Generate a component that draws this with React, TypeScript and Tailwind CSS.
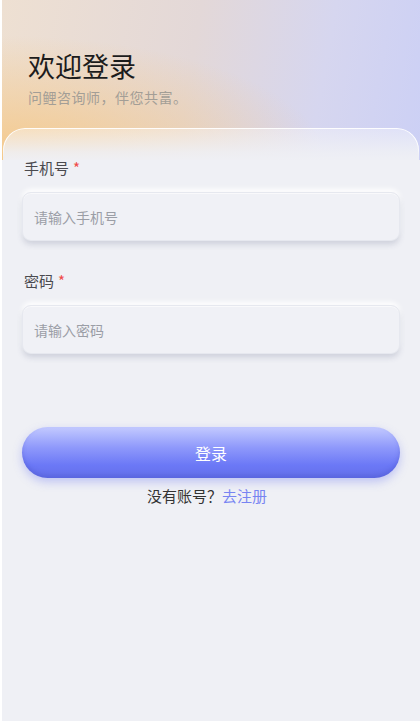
import React, { useState } from "react";

const font = { fontFamily: '"Noto Sans CJK SC", "Noto Sans", sans-serif' };

function Field({
  label,
  placeholder,
  type = "text",
}: {
  label: string;
  placeholder: string;
  type?: string;
}) {
  const [value, setValue] = useState("");
  return (
    <div className="flex flex-col">
      <label className="pl-[2px] text-[15px] leading-[22px] text-[#4a4a4f]">
        {label}
        <span className="ml-1 text-[#f04a4a]">*</span>
      </label>
      <div className="mt-[13px] h-[49px] rounded-[9px] border border-[#e6e8ef] bg-[#f0f1f6] shadow-[0_4px_6px_-1px_rgba(60,70,110,0.2),0_-3px_5px_rgba(255,255,255,0.95),inset_0_1px_0_rgba(255,255,255,0.6)]">
        <input
          type={type}
          value={value}
          onChange={(e) => setValue(e.target.value)}
          placeholder={placeholder}
          className="h-full w-full bg-transparent px-[11px] text-[14px] text-[#333] outline-none placeholder:text-[#9b9ea6]"
          style={font}
        />
      </div>
    </div>
  );
}

export default function App() {
  return (
    <div
      className="flex min-h-[721px] w-full flex-col border-l-2 border-white bg-[#eff0f5]"
      style={font}
    >
      {/* Header */}
      <div className="h-[160px] shrink-0 bg-[radial-gradient(ellipse_at_0%_100%,#f5c98a_0%,rgba(245,201,138,0)_55%),linear-gradient(100deg,#eee0d2_0%,#e3d8d8_45%,#d6d6ef_75%,#ccd0f5_100%)] px-[26px] pt-[46px]">
        <h1 className="text-[27px] leading-[40px] text-[#1c1c1c]">欢迎登录</h1>
        <p className="mt-[2px] text-[14px] leading-[18px] tracking-[0.5px] text-[#a39e96]">
          问鲤咨询师，伴您共富。
        </p>
      </div>

      {/* Card */}
      <div className="relative -mt-[32px] mx-[1px] flex-1 rounded-t-[22px] bg-[linear-gradient(to_bottom,rgba(255,255,255,0.35)_0px,rgba(239,240,245,0.9)_24px,#eff0f5_34px)] px-[19px] pt-[29px] pb-10">
        {/* glass edge */}
        <div className="pointer-events-none absolute inset-x-0 top-0 h-[30px] rounded-t-[22px] border-x-[1.5px] border-t-[1.5px] border-white/90 [mask-image:linear-gradient(to_bottom,#000_60%,transparent)]" />

        <div className="flex flex-col gap-[29px]">
          <Field label="手机号" placeholder="请输入手机号" />
          <Field label="密码" placeholder="请输入密码" type="password" />
        </div>

        <button className="mt-[73px] h-[51px] w-full rounded-full bg-[linear-gradient(to_bottom,#c3caff_0%,#8f99fb_40%,#6b78f6_75%,#6570ea_100%)] text-[16px] text-white shadow-[0_4px_10px_rgba(100,112,240,0.35),inset_0_-3px_4px_rgba(70,80,200,0.35)]">
          登录
        </button>

        <p className="mt-[7px] pr-[8px] text-center text-[15px] leading-[22px] text-[#333]">
          没有账号？<span className="text-[#7784f2]">去注册</span>
        </p>
      </div>
    </div>
  );
}
